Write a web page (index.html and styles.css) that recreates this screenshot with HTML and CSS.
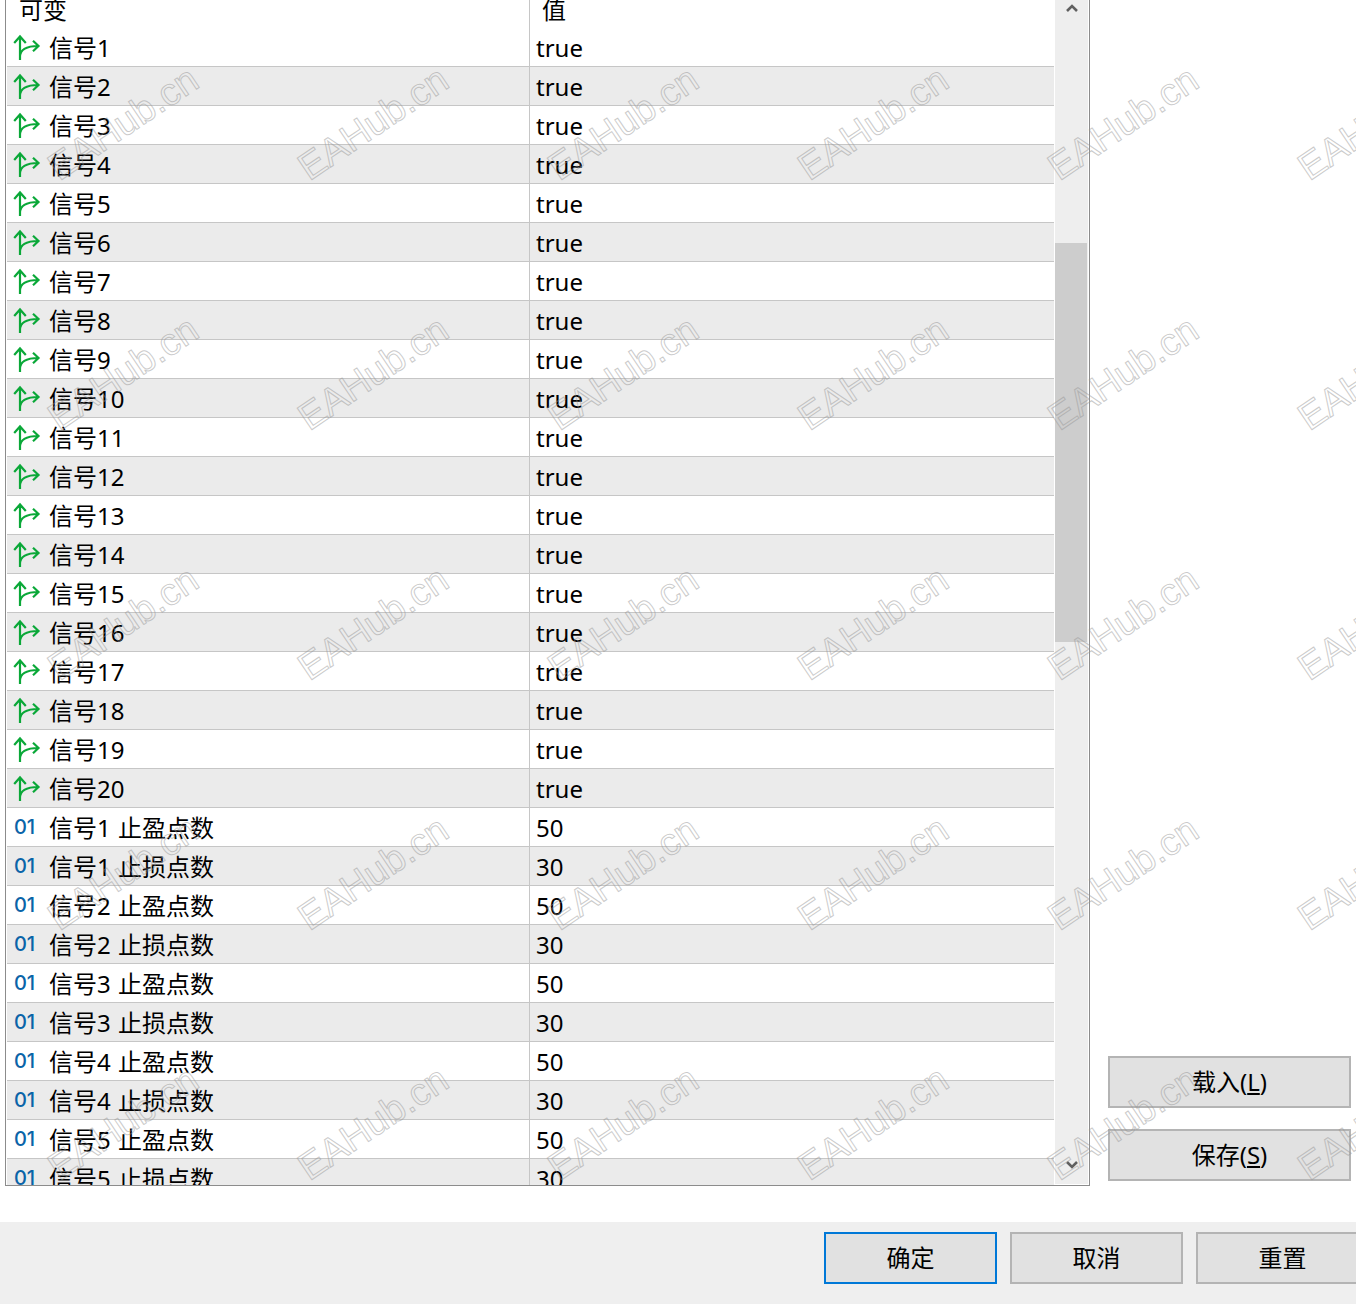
FILE: index.html
```html
<!DOCTYPE html>
<html lang="zh-CN">
<head>
<meta charset="utf-8">
<title>输入参数</title>
<link rel="stylesheet" href="styles.css">
</head>
<body>
<svg class="defs" width="0" height="0" aria-hidden="true">
  <symbol id="flag" viewBox="0 0 28 28">
    <path d="M7 26V2.500M1.200 9 7 2.500 12.800 9M7 23c0-7 6-11 18.500-11M20 6.800l5.500 5.200-5.500 5.200" fill="none" stroke="currentColor" stroke-width="2.200"/>
  </symbol>
</svg>
<main class="top">
  <section class="panel">
    <div class="list">
      <div class="row head"><div class="name">可变</div><div class="val">值</div></div>
      <div class="row"><div class="name"><svg class="ic"><use href="#flag"/></svg>信号1</div><div class="val">true</div></div>
      <div class="row"><div class="name"><svg class="ic"><use href="#flag"/></svg>信号2</div><div class="val">true</div></div>
      <div class="row"><div class="name"><svg class="ic"><use href="#flag"/></svg>信号3</div><div class="val">true</div></div>
      <div class="row"><div class="name"><svg class="ic"><use href="#flag"/></svg>信号4</div><div class="val">true</div></div>
      <div class="row"><div class="name"><svg class="ic"><use href="#flag"/></svg>信号5</div><div class="val">true</div></div>
      <div class="row"><div class="name"><svg class="ic"><use href="#flag"/></svg>信号6</div><div class="val">true</div></div>
      <div class="row"><div class="name"><svg class="ic"><use href="#flag"/></svg>信号7</div><div class="val">true</div></div>
      <div class="row"><div class="name"><svg class="ic"><use href="#flag"/></svg>信号8</div><div class="val">true</div></div>
      <div class="row"><div class="name"><svg class="ic"><use href="#flag"/></svg>信号9</div><div class="val">true</div></div>
      <div class="row"><div class="name"><svg class="ic"><use href="#flag"/></svg>信号10</div><div class="val">true</div></div>
      <div class="row"><div class="name"><svg class="ic"><use href="#flag"/></svg>信号11</div><div class="val">true</div></div>
      <div class="row"><div class="name"><svg class="ic"><use href="#flag"/></svg>信号12</div><div class="val">true</div></div>
      <div class="row"><div class="name"><svg class="ic"><use href="#flag"/></svg>信号13</div><div class="val">true</div></div>
      <div class="row"><div class="name"><svg class="ic"><use href="#flag"/></svg>信号14</div><div class="val">true</div></div>
      <div class="row"><div class="name"><svg class="ic"><use href="#flag"/></svg>信号15</div><div class="val">true</div></div>
      <div class="row"><div class="name"><svg class="ic"><use href="#flag"/></svg>信号16</div><div class="val">true</div></div>
      <div class="row"><div class="name"><svg class="ic"><use href="#flag"/></svg>信号17</div><div class="val">true</div></div>
      <div class="row"><div class="name"><svg class="ic"><use href="#flag"/></svg>信号18</div><div class="val">true</div></div>
      <div class="row"><div class="name"><svg class="ic"><use href="#flag"/></svg>信号19</div><div class="val">true</div></div>
      <div class="row"><div class="name"><svg class="ic"><use href="#flag"/></svg>信号20</div><div class="val">true</div></div>
      <div class="row"><div class="name"><span class="num">01</span>信号1 止盈点数</div><div class="val">50</div></div>
      <div class="row"><div class="name"><span class="num">01</span>信号1 止损点数</div><div class="val">30</div></div>
      <div class="row"><div class="name"><span class="num">01</span>信号2 止盈点数</div><div class="val">50</div></div>
      <div class="row"><div class="name"><span class="num">01</span>信号2 止损点数</div><div class="val">30</div></div>
      <div class="row"><div class="name"><span class="num">01</span>信号3 止盈点数</div><div class="val">50</div></div>
      <div class="row"><div class="name"><span class="num">01</span>信号3 止损点数</div><div class="val">30</div></div>
      <div class="row"><div class="name"><span class="num">01</span>信号4 止盈点数</div><div class="val">50</div></div>
      <div class="row"><div class="name"><span class="num">01</span>信号4 止损点数</div><div class="val">30</div></div>
      <div class="row"><div class="name"><span class="num">01</span>信号5 止盈点数</div><div class="val">50</div></div>
      <div class="row"><div class="name"><span class="num">01</span>信号5 止损点数</div><div class="val">30</div></div>
    </div>
    <div class="scrollbar">
      <svg class="chev up" viewBox="0 0 12 9"><path d="M1 8 6 3l5 5" fill="none" stroke="currentColor" stroke-width="2.600"/></svg>
      <div class="thumb"></div>
      <svg class="chev down" viewBox="0 0 12 9"><path d="M1 1l5 5 5-5" fill="none" stroke="currentColor" stroke-width="2.600"/></svg>
    </div>
  </section>
  <aside class="side">
    <button class="btn side-btn" type="button">载入(<u>L</u>)</button>
    <button class="btn side-btn" type="button">保存(<u>S</u>)</button>
  </aside>
</main>
<footer class="foot">
  <button class="btn foot-btn primary" type="button">确定</button>
  <button class="btn foot-btn" type="button">取消</button>
  <button class="btn foot-btn" type="button">重置</button>
</footer>
<div class="marks" aria-hidden="true">
  <span>EAHub.cn</span><span>EAHub.cn</span><span>EAHub.cn</span><span>EAHub.cn</span><span>EAHub.cn</span><span>EAHub.cn</span>
  <span>EAHub.cn</span><span>EAHub.cn</span><span>EAHub.cn</span><span>EAHub.cn</span><span>EAHub.cn</span><span>EAHub.cn</span>
  <span>EAHub.cn</span><span>EAHub.cn</span><span>EAHub.cn</span><span>EAHub.cn</span><span>EAHub.cn</span><span>EAHub.cn</span>
  <span>EAHub.cn</span><span>EAHub.cn</span><span>EAHub.cn</span><span>EAHub.cn</span><span>EAHub.cn</span><span>EAHub.cn</span>
  <span>EAHub.cn</span><span>EAHub.cn</span><span>EAHub.cn</span><span>EAHub.cn</span><span>EAHub.cn</span><span>EAHub.cn</span>
</div>
</body>
</html>
```
FILE: styles.css
```css
* { box-sizing: border-box; }
html, body { margin: 0; height: 100%; }
body {
  position: relative;
  width: 1356px;
  height: 1304px;
  overflow: hidden;
  background: #fff;
  color: #000;
  font: 24px/32px "Noto Sans", "Noto Sans CJK SC", sans-serif;
}
.defs { position: absolute; }
.top {
  display: flex;
  height: 1222px;
  padding-left: 5px;
}
.panel {
  display: flex;
  width: 1085px;
  height: 1186px;
  padding: 0 1px 1px;
  border: solid #8c8c8c;
  border-width: 0 1px 1px;
  overflow: hidden;
  background: #fff;
}
.list {
  width: 1047px;
  flex: none;
  margin-top: -11px;
  margin-right: 1px;
}
.row {
  display: grid;
  grid-template-columns: 523px 1fr;
  height: 39px;
  border-bottom: 1px solid #c6c6c6;
}
.row:nth-child(odd) { background: #ebebeb; }
.row.head { height: 39px; background: #fff; border-bottom: 0; }
.name {
  display: flex;
  align-items: center;
  padding: 2px 0 0 6px;
  border-right: 1px solid #c6c6c6;
  white-space: pre;
  word-spacing: 1px;
}
.head .name { padding-left: 12px; }
.val {
  display: flex;
  align-items: center;
  padding: 2px 0 0 6px;
}
.head .val { padding-left: 12px; }
.ic {
  width: 28px;
  height: 28px;
  flex: none;
  margin-right: 8px;
  color: #0aa838;
  overflow: visible;
}
.num {
  width: 36px;
  flex: none;
  padding-left: 1px;
  color: #0a64a8;
  font: 500 20px/24px Inter, sans-serif;
  letter-spacing: -0.200px;
  position: relative;
  top: -1px;
}
.scrollbar {
  display: flex;
  flex-direction: column;
  width: 33px;
  flex: none;
  background: #eee;
  color: #606060;
}
.chev { width: 12px; height: 9px; flex: none; margin-left: 11px; }
.chev.up { margin-top: 3px; }
.thumb {
  width: 32px;
  height: 399px;
  flex: none;
  margin-top: 231px;
  background: #cdcdcd;
}
.chev.down { margin-top: auto; margin-bottom: 14px; }
.side {
  display: flex;
  flex-direction: column;
  justify-content: flex-end;
  gap: 21px;
  width: 243px;
  margin-left: 18px;
  padding-bottom: 41px;
}
.btn {
  display: block;
  height: 52px;
  padding: 0;
  border: 2px solid #b4b4b4;
  border-radius: 0;
  background: #e1e1e1;
  color: #000;
  font: inherit;
}
.side-btn { width: 243px; flex: none; }
.foot {
  display: flex;
  gap: 13px;
  height: 82px;
  padding: 10px 0 0 824px;
  background: #efefef;
}
.foot-btn { width: 173px; flex: none; }
.primary { border-color: #0078d7; }
.marks {
  position: absolute;
  left: -2px;
  top: -2px;
  display: grid;
  grid-template-columns: repeat(6, 250px);
  grid-auto-rows: 250px;
  pointer-events: none;
}
.marks span {
  display: flex;
  align-items: center;
  justify-content: center;
  color: transparent;
  font: 38px/44px "Liberation Sans", sans-serif;
  -webkit-text-stroke: 1px rgba(150, 150, 150, 0.5);
  transform: rotate(-34deg);
  white-space: nowrap;
}
```
